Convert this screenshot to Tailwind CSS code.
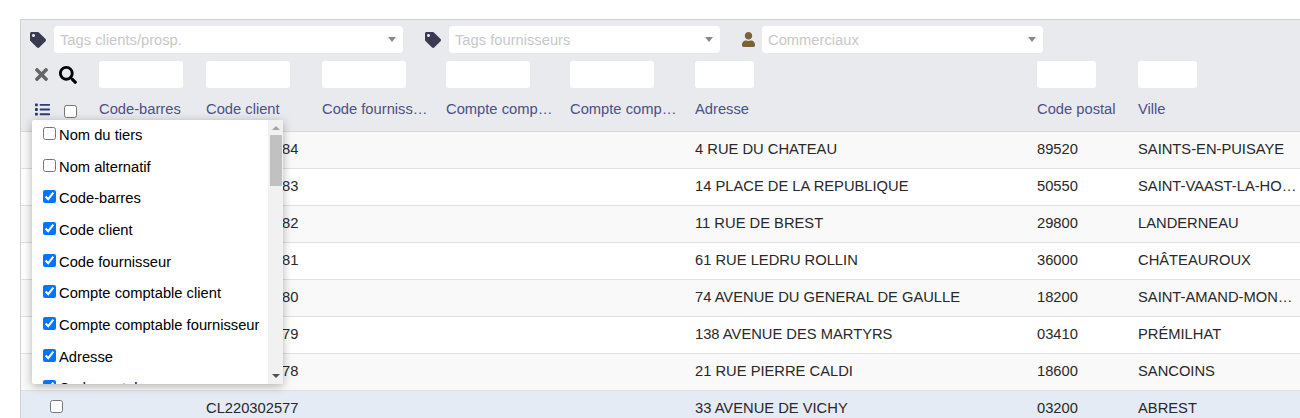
<!DOCTYPE html>
<html lang="fr">
<head>
  <meta charset="UTF-8" />
  <title>Tiers</title>
  <script src="https://cdn.jsdelivr.net/npm/@tailwindcss/browser@4"></script>
</head>
<body class="bg-white h-[418px] overflow-hidden font-['Liberation_Sans',Arial,sans-serif] text-[14.72px] text-[#282828]">
  <div class="relative ml-5 mt-[19px] border-l border-t border-[#d0d0d0]">

    <!-- Filters and column titles -->
    <div class="bg-[#e9eaed] h-[112px] pt-[6px] border-b border-[#d8d8d8]">
      <div class="flex items-center h-[27px]">
        <svg class="w-4 h-4 ml-[9px] text-[#3a3a52]" viewBox="0 0 512 512" fill="currentColor"><path d="M0 252.118V48C0 21.49 21.49 0 48 0h204.118a48 48 0 0 1 33.941 14.059l211.882 211.882c18.745 18.745 18.745 49.137 0 67.882L293.823 497.941c-18.745 18.745-49.137 18.745-67.882 0L14.059 286.059A48 48 0 0 1 0 252.118zM112 64c-26.51 0-48 21.49-48 48s21.49 48 48 48 48-21.49 48-48-21.49-48-48-48z"/></svg>
        <div class="flex items-center justify-between w-[349px] h-[27px] ml-2 pl-[6px] pr-[7px] bg-white rounded text-[#c8c8c8]">
          <span class="pt-px">Tags clients/prosp.</span>
          <span class="w-0 h-0 border-x-[4px] border-t-[5px] border-x-transparent border-t-[#888]"></span>
        </div>
        <svg class="w-4 h-4 ml-[22px] text-[#3a3a52]" viewBox="0 0 512 512" fill="currentColor"><path d="M0 252.118V48C0 21.49 21.49 0 48 0h204.118a48 48 0 0 1 33.941 14.059l211.882 211.882c18.745 18.745 18.745 49.137 0 67.882L293.823 497.941c-18.745 18.745-49.137 18.745-67.882 0L14.059 286.059A48 48 0 0 1 0 252.118zM112 64c-26.51 0-48 21.49-48 48s21.49 48 48 48 48-21.49 48-48-21.49-48-48-48z"/></svg>
        <div class="flex items-center justify-between w-[271px] h-[27px] ml-2 pl-[6px] pr-[7px] bg-white rounded text-[#c8c8c8]">
          <span class="pt-px">Tags fournisseurs</span>
          <span class="w-0 h-0 border-x-[4px] border-t-[5px] border-x-transparent border-t-[#888]"></span>
        </div>
        <svg class="w-[13px] h-[15px] ml-[22px] text-[#7d6235]" viewBox="0 0 448 512" fill="currentColor"><path d="M224 256c70.7 0 128-57.3 128-128S294.7 0 224 0 96 57.3 96 128s57.3 128 128 128zm89.6 32h-16.7c-22.2 10.2-46.9 16-72.9 16s-50.6-5.8-72.9-16h-16.7C60.2 288 0 348.2 0 422.4V464c0 26.5 21.5 48 48 48h352c26.5 0 48-21.5 48-48v-41.6c0-74.2-60.2-134.4-134.4-134.4z"/></svg>
        <div class="flex items-center justify-between w-[281px] h-[27px] ml-[7px] pl-[6px] pr-[7px] bg-white rounded text-[#c8c8c8]">
          <span class="pt-px">Commerciaux</span>
          <span class="w-0 h-0 border-x-[4px] border-t-[5px] border-x-transparent border-t-[#888]"></span>
        </div>
      </div>

      <div class="grid grid-cols-[78px_107px_116px_124px_124px_125px_342px_101px_162px] items-center h-[27px] mt-2">
        <div class="flex items-center">
          <svg class="w-[13px] h-[19px] ml-[14px] text-[#666]" viewBox="0 0 352 512" fill="currentColor"><path d="M242.72 256l100.07-100.07c12.28-12.28 12.28-32.19 0-44.48l-22.24-22.24c-12.28-12.28-32.19-12.28-44.48 0L176 189.28 75.93 89.21c-12.28-12.28-32.19-12.28-44.48 0L9.21 111.45c-12.28 12.28-12.28 32.19 0 44.48L109.28 256 9.21 356.07c-12.28 12.28-12.28 32.19 0 44.48l22.24 22.24c12.28 12.28 32.2 12.28 44.48 0L176 322.72l100.07 100.07c12.28 12.28 32.2 12.28 44.48 0l22.24-22.24c12.28-12.28 12.28-32.19 0-44.48L242.72 256z"/></svg>
          <svg class="w-[18px] h-[18px] ml-[11px] text-black" viewBox="0 0 512 512" fill="currentColor"><path d="M505 442.7L405.3 343c-4.5-4.5-10.6-7-17-7H372c27.6-35.3 44-79.7 44-128C416 93.1 322.9 0 208 0S0 93.1 0 208s93.1 208 208 208c48.3 0 92.7-16.4 128-44v16.3c0 6.4 2.5 12.5 7 17l99.7 99.7c9.4 9.4 24.6 9.4 33.9 0l28.3-28.3c9.4-9.4 9.4-24.6.1-34zM208 336c-70.7 0-128-57.2-128-128 0-70.7 57.2-128 128-128 70.7 0 128 57.2 128 128 0 70.7-57.2 128-128 128z"/></svg>
        </div>
        <div class="w-[84px] h-[27px] bg-white rounded-[3px]"></div>
        <div class="w-[84px] h-[27px] bg-white rounded-[3px]"></div>
        <div class="w-[84px] h-[27px] bg-white rounded-[3px]"></div>
        <div class="w-[84px] h-[27px] bg-white rounded-[3px]"></div>
        <div class="w-[84px] h-[27px] bg-white rounded-[3px]"></div>
        <div class="w-[59px] h-[27px] bg-white rounded-[3px]"></div>
        <div class="w-[59px] h-[27px] bg-white rounded-[3px]"></div>
        <div class="w-[59px] h-[27px] bg-white rounded-[3px]"></div>
      </div>

      <div class="grid grid-cols-[78px_107px_116px_124px_124px_125px_342px_101px_162px] items-center h-[17px] mt-[13px] text-[#4b5088]">
        <div class="flex items-center">
          <svg class="w-[15px] h-[15px] ml-[14px] text-[#2b3a7a]" viewBox="0 0 512 512" fill="currentColor"><path d="M80 368H16a16 16 0 0 0-16 16v64a16 16 0 0 0 16 16h64a16 16 0 0 0 16-16v-64a16 16 0 0 0-16-16zm0-320H16A16 16 0 0 0 0 64v64a16 16 0 0 0 16 16h64a16 16 0 0 0 16-16V64a16 16 0 0 0-16-16zm0 160H16a16 16 0 0 0-16 16v64a16 16 0 0 0 16 16h64a16 16 0 0 0 16-16v-64a16 16 0 0 0-16-16zm416 176H176a16 16 0 0 0-16 16v32a16 16 0 0 0 16 16h320a16 16 0 0 0 16-16v-32a16 16 0 0 0-16-16zm0-320H176a16 16 0 0 0-16 16v32a16 16 0 0 0 16 16h320a16 16 0 0 0 16-16V80a16 16 0 0 0-16-16zm0 160H176a16 16 0 0 0-16 16v32a16 16 0 0 0 16 16h320a16 16 0 0 0 16-16v-32a16 16 0 0 0-16-16z"/></svg>
          <input type="checkbox" class="ml-[14px] mt-[3px]" />
        </div>
        <div class="truncate pr-4">Code-barres</div>
        <div class="truncate pr-4">Code client</div>
        <div class="truncate pr-4">Code fournisseur</div>
        <div class="truncate pr-4">Compte comptable client</div>
        <div class="truncate pr-4">Compte comptable fournisseur</div>
        <div class="truncate pr-4">Adresse</div>
        <div class="truncate pr-4">Code postal</div>
        <div class="truncate pr-[2px]">Ville</div>
      </div>
    </div>

    <!-- Rows -->
    <div class="grid grid-cols-[78px_107px_116px_124px_124px_125px_342px_101px_162px] items-center h-[37px] pb-[2px] bg-[#f9f9f9] border-b border-[#e0e0e0]">
      <div class="pl-[29px] flex"><input type="checkbox" class="mb-[3px]" /></div><div></div><div class="truncate">CL220302584</div><div></div><div></div><div></div><div class="truncate">4 RUE DU CHATEAU</div><div>89520</div><div class="truncate pr-[2px]">SAINTS-EN-PUISAYE</div>
    </div>
    <div class="grid grid-cols-[78px_107px_116px_124px_124px_125px_342px_101px_162px] items-center h-[37px] pb-[2px] bg-white border-b border-[#e0e0e0]">
      <div class="pl-[29px] flex"><input type="checkbox" class="mb-[3px]" /></div><div></div><div class="truncate">CL220302583</div><div></div><div></div><div></div><div class="truncate">14 PLACE DE LA REPUBLIQUE</div><div>50550</div><div class="truncate pr-[2px]">SAINT-VAAST-LA-HOUGUE</div>
    </div>
    <div class="grid grid-cols-[78px_107px_116px_124px_124px_125px_342px_101px_162px] items-center h-[37px] pb-[2px] bg-[#f9f9f9] border-b border-[#e0e0e0]">
      <div class="pl-[29px] flex"><input type="checkbox" class="mb-[3px]" /></div><div></div><div class="truncate">CL220302582</div><div></div><div></div><div></div><div class="truncate">11 RUE DE BREST</div><div>29800</div><div class="truncate pr-[2px]">LANDERNEAU</div>
    </div>
    <div class="grid grid-cols-[78px_107px_116px_124px_124px_125px_342px_101px_162px] items-center h-[37px] pb-[2px] bg-white border-b border-[#e0e0e0]">
      <div class="pl-[29px] flex"><input type="checkbox" class="mb-[3px]" /></div><div></div><div class="truncate">CL220302581</div><div></div><div></div><div></div><div class="truncate">61 RUE LEDRU ROLLIN</div><div>36000</div><div class="truncate pr-[2px]">CHÂTEAUROUX</div>
    </div>
    <div class="grid grid-cols-[78px_107px_116px_124px_124px_125px_342px_101px_162px] items-center h-[37px] pb-[2px] bg-[#f9f9f9] border-b border-[#e0e0e0]">
      <div class="pl-[29px] flex"><input type="checkbox" class="mb-[3px]" /></div><div></div><div class="truncate">CL220302580</div><div></div><div></div><div></div><div class="truncate">74 AVENUE DU GENERAL DE GAULLE</div><div>18200</div><div class="truncate pr-[2px]">SAINT-AMAND-MONTROND</div>
    </div>
    <div class="grid grid-cols-[78px_107px_116px_124px_124px_125px_342px_101px_162px] items-center h-[37px] pb-[2px] bg-white border-b border-[#e0e0e0]">
      <div class="pl-[29px] flex"><input type="checkbox" class="mb-[3px]" /></div><div></div><div class="truncate">CL220302579</div><div></div><div></div><div></div><div class="truncate">138 AVENUE DES MARTYRS</div><div>03410</div><div class="truncate pr-[2px]">PRÉMILHAT</div>
    </div>
    <div class="grid grid-cols-[78px_107px_116px_124px_124px_125px_342px_101px_162px] items-center h-[37px] pb-[2px] bg-[#f9f9f9] border-b border-[#e0e0e0]">
      <div class="pl-[29px] flex"><input type="checkbox" class="mb-[3px]" /></div><div></div><div class="truncate">CL220302578</div><div></div><div></div><div></div><div class="truncate">21 RUE PIERRE CALDI</div><div>18600</div><div class="truncate pr-[2px]">SANCOINS</div>
    </div>
    <div class="grid grid-cols-[78px_107px_116px_124px_124px_125px_342px_101px_162px] items-center h-[37px] pb-[2px] bg-[#e5ebf4] border-b border-[#e0e0e0]">
      <div class="pl-[29px] flex"><input type="checkbox" class="mb-[3px]" /></div><div></div><div class="truncate">CL220302577</div><div></div><div></div><div></div><div class="truncate">33 AVENUE DE VICHY</div><div>03200</div><div class="truncate pr-[2px]">ABREST</div>
    </div>

    <!-- Column chooser menu -->
    <div class="absolute left-[11px] top-[100px] w-[251px] h-[264px] bg-white shadow-[0_2px_10px_rgba(0,0,0,0.3)] rounded-[2px] flex overflow-hidden text-black">
      <ul class="flex-1 pl-[11px] pt-[4px] overflow-hidden">
        <li class="flex items-start h-[31.68px] whitespace-nowrap"><input type="checkbox" class="mt-[3px] mr-[3px]" />Nom du tiers</li>
        <li class="flex items-start h-[31.68px] whitespace-nowrap"><input type="checkbox" class="mt-[3px] mr-[3px]" />Nom alternatif</li>
        <li class="flex items-start h-[31.68px] whitespace-nowrap"><input type="checkbox" checked class="mt-[3px] mr-[3px]" />Code-barres</li>
        <li class="flex items-start h-[31.68px] whitespace-nowrap"><input type="checkbox" checked class="mt-[3px] mr-[3px]" />Code client</li>
        <li class="flex items-start h-[31.68px] whitespace-nowrap"><input type="checkbox" checked class="mt-[3px] mr-[3px]" />Code fournisseur</li>
        <li class="flex items-start h-[31.68px] whitespace-nowrap"><input type="checkbox" checked class="mt-[3px] mr-[3px]" />Compte comptable client</li>
        <li class="flex items-start h-[31.68px] whitespace-nowrap"><input type="checkbox" checked class="mt-[3px] mr-[3px]" />Compte comptable fournisseur</li>
        <li class="flex items-start h-[31.68px] whitespace-nowrap"><input type="checkbox" checked class="mt-[3px] mr-[3px]" />Adresse</li>
        <li class="flex items-start h-[31.68px] whitespace-nowrap"><input type="checkbox" checked class="mt-[3px] mr-[3px]" />Code postal</li>
      </ul>
      <div class="relative w-[15px] bg-[#f1f1f1]">
        <span class="absolute left-1 top-[6px] w-0 h-0 border-x-[4px] border-b-[4px] border-x-transparent border-b-[#a3a3a3]"></span>
        <span class="absolute left-[2px] top-[15px] w-[12px] h-[51px] bg-[#c1c1c1]"></span>
        <span class="absolute left-1 bottom-[6px] w-0 h-0 border-x-[4px] border-t-[4px] border-x-transparent border-t-[#505050]"></span>
      </div>
    </div>
  </div>
</body>
</html>
